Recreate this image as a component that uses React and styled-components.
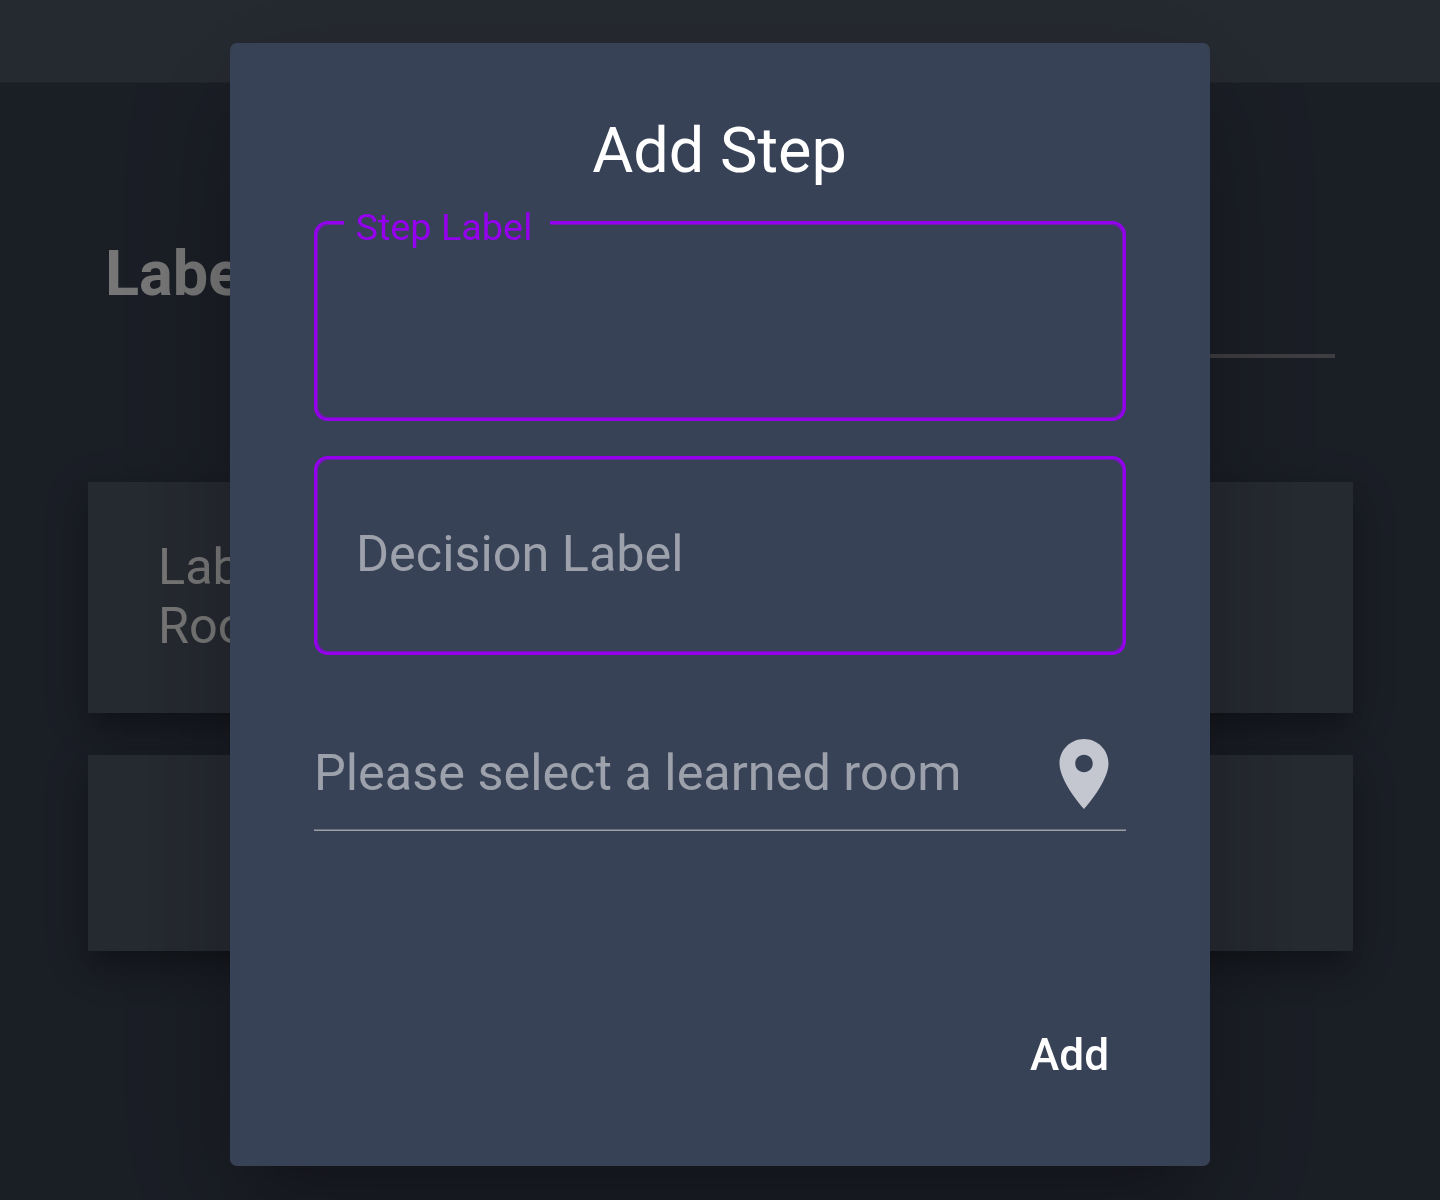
import React from 'react';
import styled, { createGlobalStyle } from 'styled-components';

const GlobalStyle = createGlobalStyle`
  *, *::before, *::after { box-sizing: border-box; }
  body {
    margin: 0;
    overflow: hidden;
    font-family: Roboto, "Liberation Sans", sans-serif;
    background: #353c4b;
  }
`;

const Page = styled.div`
  height: 1200px;
  overflow: hidden;
  color: #ececec;
`;

const TopBar = styled.header`
  height: 82px;
  background: #4b5361;
  border-bottom: 1px solid #3f4755;
  box-sizing: content-box;
`;

const Content = styled.main`
  display: flex;
  flex-direction: column;
  padding: 154px 87px 0 88px;
`;

const HeadingRow = styled.div`
  display: flex;
  justify-content: space-between;
  height: 121px;
  padding: 0 18px 0 17px;
  margin-bottom: 124px;
`;

const Heading = styled.h1`
  margin: 0;
  font-size: 63px;
  line-height: 74px;
  font-weight: 700;
`;

const HeadingField = styled.div`
  width: 800px;
  border-bottom: 4px solid #7a7a84;
`;

const Cards = styled.div`
  display: flex;
  flex-direction: column;
  gap: 42px;
`;

const Card = styled.section`
  height: ${(p) => p.$height}px;
  padding: 55px 70px;
  background: #4b5361;
  font-size: 50.4px;
  line-height: 59px;
  box-shadow:
    0 14px 17.5px -7px rgba(0, 0, 0, 0.18),
    0 24px 35px 0 rgba(0, 0, 0, 0.12),
    0 10px 42px 4px rgba(0, 0, 10, 0.12);
`;

const CardLine = styled.div`
  white-space: nowrap;
`;

const Backdrop = styled.div`
  position: fixed;
  inset: 0;
  display: flex;
  justify-content: center;
  align-items: flex-start;
  padding-top: 43px;
  background: rgba(0, 0, 0, 0.5);
`;

const Dialog = styled.div`
  display: flex;
  flex-direction: column;
  width: 980px;
  height: 1123px;
  padding: 71px 84px 0;
  border-radius: 7px;
  background: #384256;
  box-shadow:
    0 38.5px 52.5px -24.5px rgba(0, 0, 0, 0.16),
    0 70px 110px 0 rgba(0, 0, 6, 0.12),
    0 31.5px 130px 14px rgba(0, 0, 6, 0.11);
`;

const DialogTitle = styled.h2`
  margin: 0 1px 33px 0;
  color: #fff;
  font-size: 63px;
  line-height: 74px;
  font-weight: 400;
  text-align: center;
`;

const Field = styled.label`
  display: flex;
  height: ${(p) => p.$height}px;
  margin-bottom: 35px;
`;

const OutlineStart = styled.span`
  width: 30px;
  border: 3px solid #9400ee;
  border-right: 0;
  border-radius: 14px 0 0 14px;
  box-shadow: inset 1px 1px 0 #6c1daa, inset 1px -1px 0 #6c1daa;
`;

const OutlineNotch = styled.span`
  position: relative;
  width: ${(p) => (p.$open ? 206 : 350)}px;
  border-bottom: 3px solid #9400ee;
  border-top: 3px solid ${(p) => (p.$open ? 'transparent' : '#9400ee')};
  box-shadow: inset 0 -1px 0 #6c1daa${(p) => (p.$open ? '' : ', inset 0 1px 0 #6c1daa')};
`;

const OutlineEnd = styled.span`
  flex: 1;
  border: 3px solid #9400ee;
  border-left: 0;
  border-radius: 0 14px 14px 0;
  box-shadow: inset -1px 1px 0 #6c1daa, inset -1px -1px 0 #6c1daa;
`;

const FloatingLabel = styled.span`
  position: absolute;
  left: 11.5px;
  top: -19px;
  color: #9400ee;
  font-size: 37.8px;
  line-height: 44px;
  white-space: nowrap;
`;

const Placeholder = styled.span`
  display: block;
  padding: 65px 0 0 12px;
  color: #9ca1ab;
  font-size: 50.4px;
  line-height: 60px;
  white-space: nowrap;
`;

const RoomSelect = styled.div`
  display: flex;
  justify-content: space-between;
  height: 100px;
  margin-top: 41px;
  border-bottom: 1px solid #9b9ea3;
  box-shadow: inset 0 -1px 0 #6c737f;
`;

const RoomText = styled.span`
  padding-top: 12px;
  color: #9ca1ab;
  font-size: 50.4px;
  line-height: 60px;
  white-space: nowrap;
`;

const PinIcon = styled.svg`
  width: 84px;
  height: 84px;
  margin-top: 1px;
  fill: #c4c7cf;
`;

const Actions = styled.div`
  display: flex;
  justify-content: flex-end;
  margin-top: 194px;
  padding-right: 17px;
`;

const AddButton = styled.button`
  padding: 0;
  border: 0;
  background: none;
  color: #fff;
  font: 500 44.1px/60px Roboto, "Liberation Sans", sans-serif;
`;

export default function App() {
  return (
    <>
      <GlobalStyle />
      <Page>
        <TopBar />
        <Content>
          <HeadingRow>
            <Heading>Label</Heading>
            <HeadingField />
          </HeadingRow>
          <Cards>
            <Card $height={231}>
              <CardLine>Label</CardLine>
              <CardLine>Room</CardLine>
            </Card>
            <Card $height={196} />
          </Cards>
        </Content>
      </Page>
      <Backdrop>
        <Dialog role="dialog">
          <DialogTitle>Add Step</DialogTitle>
          <Field $height={200}>
            <OutlineStart />
            <OutlineNotch $open>
              <FloatingLabel>Step Label</FloatingLabel>
            </OutlineNotch>
            <OutlineEnd />
          </Field>
          <Field $height={199}>
            <OutlineStart />
            <OutlineNotch>
              <Placeholder>Decision Label</Placeholder>
            </OutlineNotch>
            <OutlineEnd />
          </Field>
          <RoomSelect>
            <RoomText>Please select a learned room</RoomText>
            <PinIcon viewBox="0 0 24 24">
              <path d="M12 2C8.13 2 5 5.13 5 9c0 5.25 7 13 7 13s7-7.75 7-13c0-3.87-3.13-7-7-7zm0 9.5c-1.38 0-2.5-1.12-2.5-2.5s1.12-2.5 2.5-2.5 2.5 1.12 2.5 2.5-1.12 2.5-2.5 2.5z" />
            </PinIcon>
          </RoomSelect>
          <Actions>
            <AddButton>Add</AddButton>
          </Actions>
        </Dialog>
      </Backdrop>
    </>
  );
}
